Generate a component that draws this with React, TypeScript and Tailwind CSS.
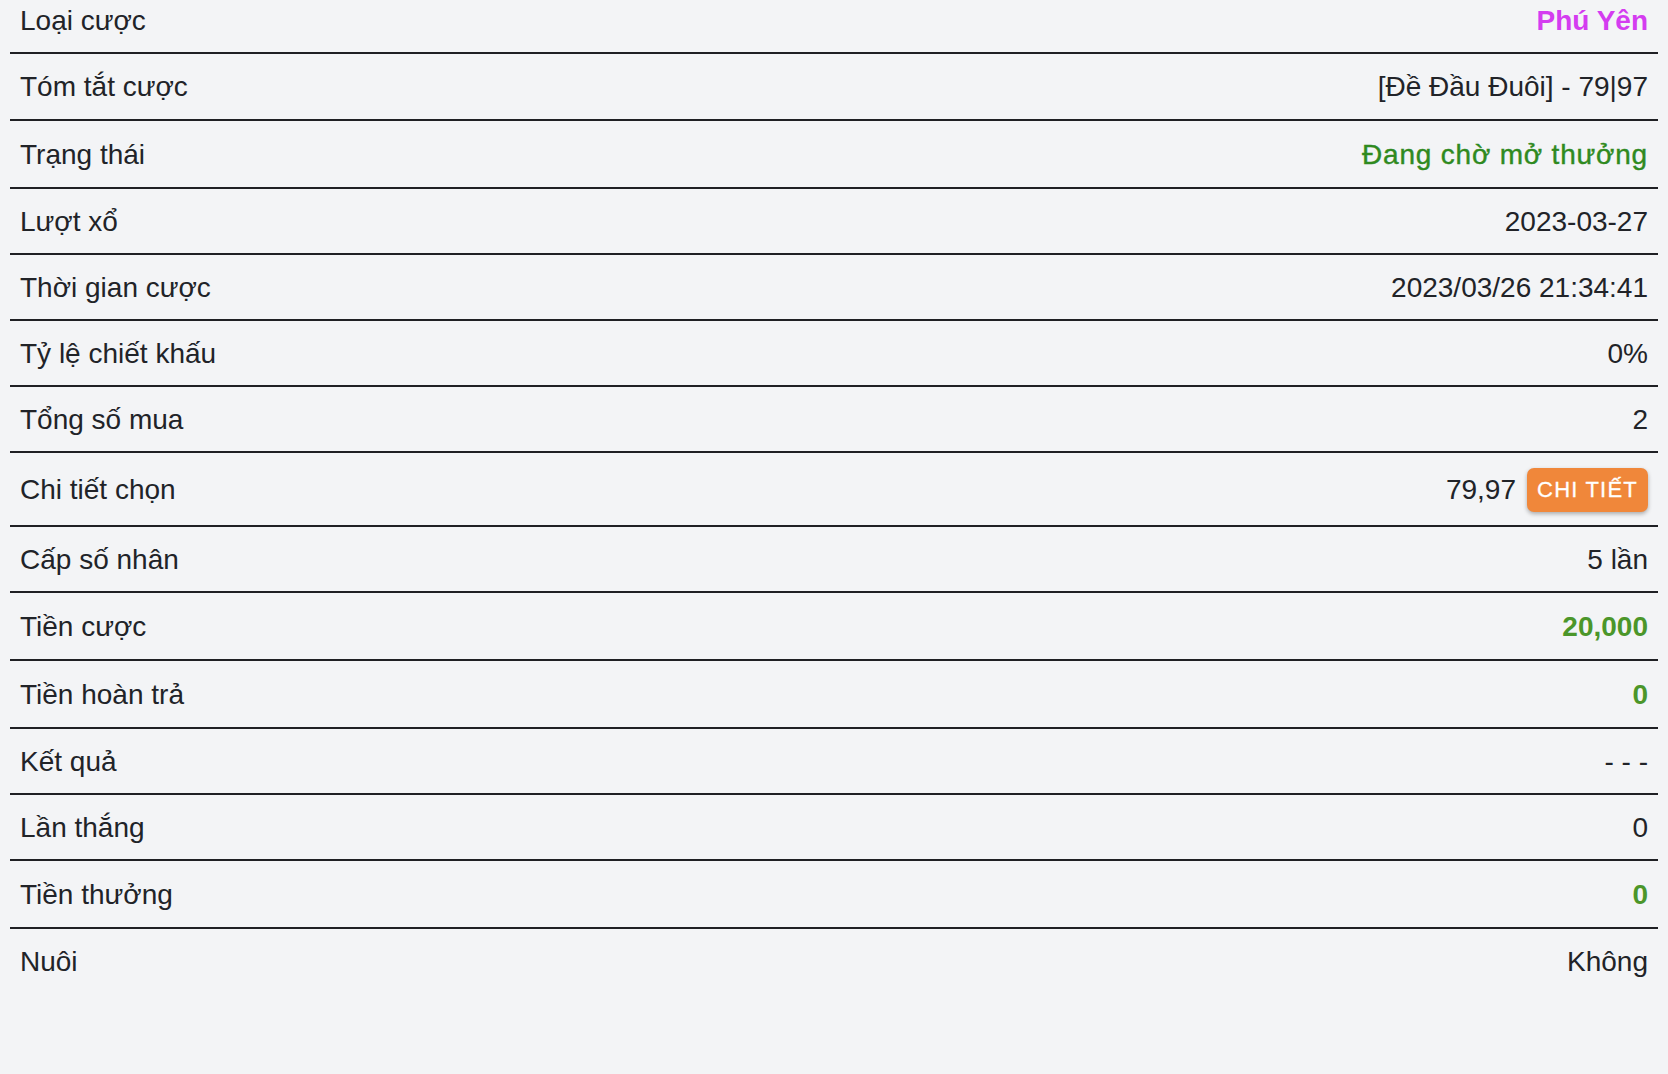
import React from "react";

type Row = {
  label: string;
  value: React.ReactNode;
  h: string;
  last?: boolean;
};

const font = { fontFamily: '"Liberation Sans", Arial, "Noto Sans", sans-serif' };

export default function App() {
  const rows: Row[] = [
    {
      label: "Loại cược",
      value: <span className="font-bold text-[#d43cf0]">Phú Yên</span>,
      h: "h-[66px]",
    },
    { label: "Tóm tắt cược", value: "[Đề Đầu Đuôi] - 79|97", h: "h-[67px]" },
    {
      label: "Trạng thái",
      value: (
        <span className="text-[#2f8a1f] tracking-[0.8px] [-webkit-text-stroke:0.4px_#2f8a1f]">
          Đang chờ mở thưởng
        </span>
      ),
      h: "h-[68px]",
    },
    { label: "Lượt xổ", value: "2023-03-27", h: "h-[66px]" },
    { label: "Thời gian cược", value: "2023/03/26 21:34:41", h: "h-[66px]" },
    { label: "Tỷ lệ chiết khấu", value: "0%", h: "h-[66px]" },
    { label: "Tổng số mua", value: "2", h: "h-[66px]" },
    {
      label: "Chi tiết chọn",
      value: (
        <span className="flex items-center gap-[11px]">
          <span>79,97</span>
          <button className="h-[44px] w-[121px] rounded-[7px] bg-[#f0873a] text-[22px] tracking-[1.2px] text-white shadow-[0_2px_4px_rgba(0,0,0,0.3)] [-webkit-text-stroke:0.3px_#ffffff]">
            CHI TIẾT
          </button>
        </span>
      ),
      h: "h-[74px]",
    },
    { label: "Cấp số nhân", value: "5 lần", h: "h-[66px]" },
    {
      label: "Tiền cược",
      value: <span className="font-bold text-[#4b962a]">20,000</span>,
      h: "h-[68px]",
    },
    {
      label: "Tiền hoàn trả",
      value: <span className="font-bold text-[#4b962a]">0</span>,
      h: "h-[68px]",
    },
    { label: "Kết quả", value: "- - -", h: "h-[66px]" },
    { label: "Lần thắng", value: "0", h: "h-[66px]" },
    {
      label: "Tiền thưởng",
      value: <span className="font-bold text-[#4b962a]">0</span>,
      h: "h-[68px]",
    },
    { label: "Nuôi", value: "Không", h: "h-[64px]", last: true },
  ];

  return (
    <div
      className="h-[1074px] w-full overflow-hidden bg-[#f3f4f6] text-[#212328]"
      style={font}
    >
      <div className="mx-[10px] -mt-[12px]">
        {rows.map((r, i) => (
          <div
            key={i}
            className={`flex items-center justify-between px-[10px] pt-[1px] text-[28px] ${r.h} ${
              r.last ? "" : "border-b-2 border-[#1f2024]"
            }`}
          >
            <span>{r.label}</span>
            <span className="flex items-center">{r.value}</span>
          </div>
        ))}
      </div>
    </div>
  );
}
